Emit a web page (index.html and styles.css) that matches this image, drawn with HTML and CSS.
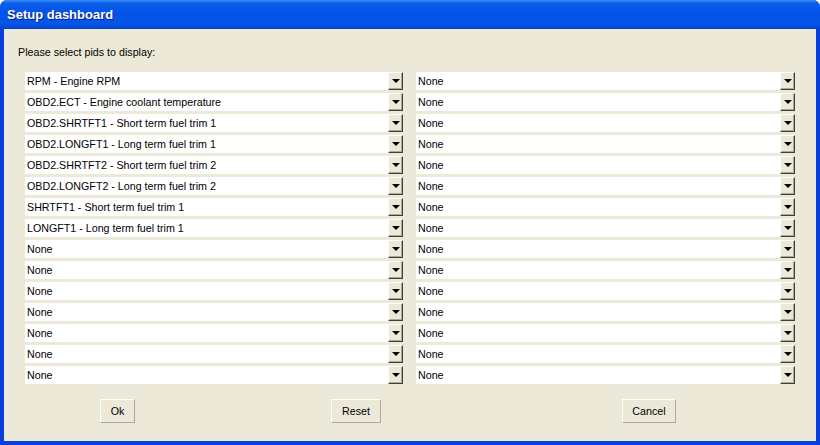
FILE: index.html
```html
<!DOCTYPE html>
<html lang="en">
<head>
  <meta charset="UTF-8">
  <title>Setup dashboard</title>
  <link rel="stylesheet" href="styles.css">
</head>
<body>

  <!-- Dialog window -->
  <div class="window">
    <div class="titlebar">Setup dashboard</div>

    <div class="content">
      <p class="prompt">Please select pids to display:</p>

      <div class="pid-grid" id="pidGrid"></div>

      <div class="buttons">
        <button class="btn btn-ok">Ok</button>
        <button class="btn btn-reset">Reset</button>
        <button class="btn btn-cancel">Cancel</button>
      </div>
    </div>
  </div>

  <script>
    // left column values, right column is all "None"
    const left = [
      "RPM - Engine RPM",
      "OBD2.ECT - Engine coolant temperature",
      "OBD2.SHRTFT1 - Short term fuel trim 1",
      "OBD2.LONGFT1 - Long term fuel trim 1",
      "OBD2.SHRTFT2 - Short term fuel trim 2",
      "OBD2.LONGFT2 - Long term fuel trim 2",
      "SHRTFT1 - Short term fuel trim 1",
      "LONGFT1 - Long term fuel trim 1"
    ];

    const grid = document.getElementById("pidGrid");
    for (let i = 0; i < 15; i++) {
      [left[i] || "None", "None"].forEach((text) => {
        const combo = document.createElement("div");
        combo.classList.add("combo");
        combo.innerHTML = `<span class="combo-text">${text}</span><span class="combo-btn"></span>`;
        grid.appendChild(combo);
      });
    }
  </script>

</body>
</html>
```

FILE: styles.css
```css
/* Basic Reset */
* {
  margin: 0;
  padding: 0;
  box-sizing: border-box;
}

body {
  font-family: "Liberation Sans", Arial, sans-serif;
  font-size: 10.7px;
  color: #000;
  background-color: #fff;
}

/* Window frame */
.window {
  width: 820px;
  height: 445px;
  display: flex;
  flex-direction: column;
  background-color: #0a3ee0;
  border-radius: 7px 7px 0 0;
  overflow: hidden;
}

.titlebar {
  height: 29px;
  padding: 0 7px;
  display: flex;
  align-items: center;
  color: #fff;
  font-size: 13px;
  font-weight: bold;
  text-shadow: 1px 1px 0 #0a1c8c;
  background: linear-gradient(to bottom, #3a8cf7 0%, #0a5eea 12%, #0254e6 45%, #0556ec 80%, #0543c8 100%);
}

/* Dialog body */
.content {
  flex: 1;
  margin: 0 4px 4px 4px;
  padding: 0 21px;
  background-color: #ece9d8;
  display: flex;
  flex-direction: column;
}

.prompt {
  margin: 17px 0 0 -7px;
  height: 13px;
  line-height: 13px;
}

/* Combo grid */
.pid-grid {
  margin-top: 13px;
  display: grid;
  grid-template-columns: 378px 379px;
  column-gap: 13px;
  row-gap: 3px;
}

.combo {
  height: 18px;
  display: flex;
  align-items: center;
  background-color: #fff;
}

.combo-text {
  flex: 1;
  padding-left: 2px;
  white-space: nowrap;
  overflow: hidden;
}

.combo-btn {
  width: 15px;
  height: 18px;
  position: relative;
  background-color: #ece9d8;
  border-top: 1px solid #fff;
  border-left: 1px solid #fff;
  border-right: 1px solid #404040;
  border-bottom: 1px solid #404040;
  box-shadow: inset -1px -1px 0 #aca899;
}

.combo-btn::after {
  content: "";
  position: absolute;
  left: 3px;
  top: 6px;
  border-left: 4px solid transparent;
  border-right: 4px solid transparent;
  border-top: 4px solid #000;
}

/* Buttons */
.buttons {
  margin-top: 15px;
  display: flex;
  padding-left: 75px;
}

.btn {
  height: 24px;
  font-family: "Liberation Sans", Arial, sans-serif;
  font-size: 10.7px;
  color: #000;
  background-color: #ece9d8;
  border-top: 1px solid #fff;
  border-left: 1px solid #fff;
  border-right: 1px solid #aca899;
  border-bottom: 1px solid #aca899;
}

.btn-ok {
  width: 35px;
}

.btn-reset {
  width: 50px;
  margin-left: 196px;
}

.btn-cancel {
  width: 54px;
  margin-left: 241px;
}
```
